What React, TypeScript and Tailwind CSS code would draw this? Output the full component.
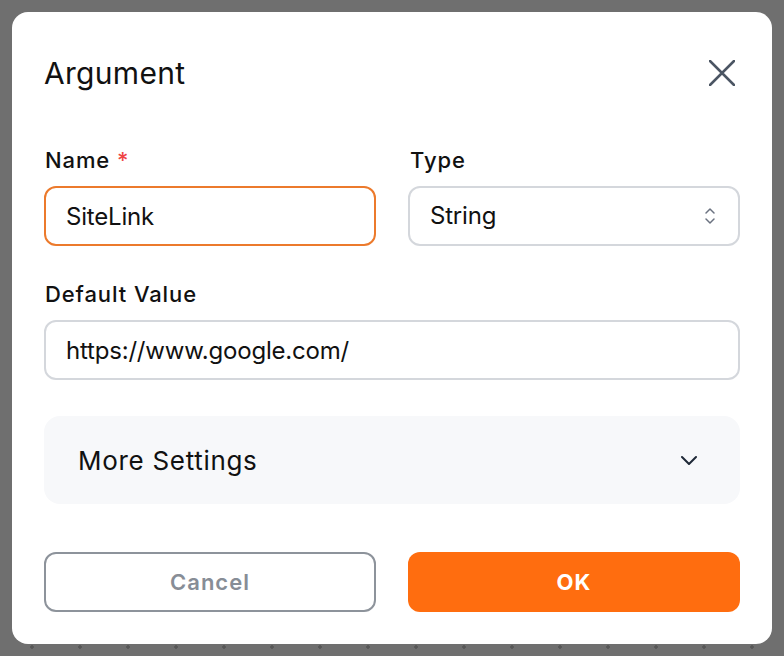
import React, { useState } from 'react'

function CloseIcon() {
  return (
    <svg width="26" height="26" viewBox="0 0 26 26" fill="none" stroke="#4b5563" strokeWidth="2.5" strokeLinecap="round">
      <path d="M1 1L25 25M25 1L1 25" />
    </svg>
  )
}

function UpDownIcon() {
  return (
    <svg width="12" height="18" viewBox="0 0 12 18" fill="none" stroke="#6b7280" strokeWidth="1.5" strokeLinecap="round" strokeLinejoin="round">
      <path d="M2 6l4-4 4 4M2 12l4 4 4-4" />
    </svg>
  )
}

function ChevronDown() {
  return (
    <svg width="18" height="10" viewBox="0 0 18 10" fill="none" stroke="#1f2937" strokeWidth="2" strokeLinecap="round" strokeLinejoin="round">
      <path d="M2 2l7 7 7-7" />
    </svg>
  )
}

export default function App() {
  const [name, setName] = useState('SiteLink')
  const [value, setValue] = useState('https://www.google.com/')

  return (
    <div className="h-screen w-full p-3 bg-[#6f6f6f] bg-[radial-gradient(circle,#575757_1.5px,transparent_2px)] bg-[size:48px_48px] bg-[position:8px_-1px] font-['Inter',sans-serif]">
      {/* Dialog */}
      <div className="h-full bg-white rounded-2xl px-8 pt-[43px] pb-8 flex flex-col">
        {/* Header */}
        <div className="flex items-center justify-between h-9">
          <h2 className="text-[30px] leading-9 tracking-[0.3px] text-[#111]">Argument</h2>
          <button className="mr-[5px]">
            <CloseIcon />
          </button>
        </div>

        {/* Name / Type */}
        <div className="grid grid-cols-2 gap-8 mt-[55px]">
          <div>
            <label className="block text-[22px] leading-7 tracking-[0.9px] font-medium text-[#111] pl-px">
              Name <span className="text-[#ef4444]">*</span>
            </label>
            <input
              value={name}
              onChange={e => setName(e.target.value)}
              className="mt-3 w-full h-[60px] rounded-xl border-2 border-[#ec7a2c] px-[20px] text-[24px] tracking-[-0.2px] text-[#111] outline-none"
            />
          </div>
          <div>
            <label className="block text-[22px] leading-7 tracking-[0.9px] font-medium text-[#111] pl-0.5">Type</label>
            <div className="mt-3 h-[60px] rounded-xl border-2 border-[#d4d7dc] pl-[20px] pr-[22px] flex items-center justify-between">
              <span className="text-[24px] tracking-[-0.2px] text-[#111]">String</span>
              <UpDownIcon />
            </div>
          </div>
        </div>

        {/* Default value */}
        <div className="mt-[34px]">
          <label className="block text-[22px] leading-7 tracking-[0.9px] font-medium text-[#111] pl-px">Default Value</label>
          <input
            value={value}
            onChange={e => setValue(e.target.value)}
            className="mt-3 w-full h-[60px] rounded-xl border-2 border-[#d4d7dc] px-[20px] text-[24px] tracking-[-0.2px] text-[#111] outline-none"
          />
        </div>

        {/* More settings */}
        <div className="mt-9 h-[88px] rounded-2xl bg-[#f7f8fa] pl-[34px] pr-[42px] flex items-center justify-between">
          <span className="text-[26px] tracking-[0.7px] text-[#111]">More Settings</span>
          <ChevronDown />
        </div>

        {/* Actions */}
        <div className="grid grid-cols-2 gap-8 mt-auto">
          <button className="h-[60px] rounded-xl border-2 border-[#8d939b] text-[22px] tracking-[1px] font-semibold text-[#878d96]">
            Cancel
          </button>
          <button className="h-[60px] rounded-xl bg-[#ff6d0f] text-[22px] tracking-[1px] font-bold text-white">
            OK
          </button>
        </div>
      </div>
    </div>
  )
}
